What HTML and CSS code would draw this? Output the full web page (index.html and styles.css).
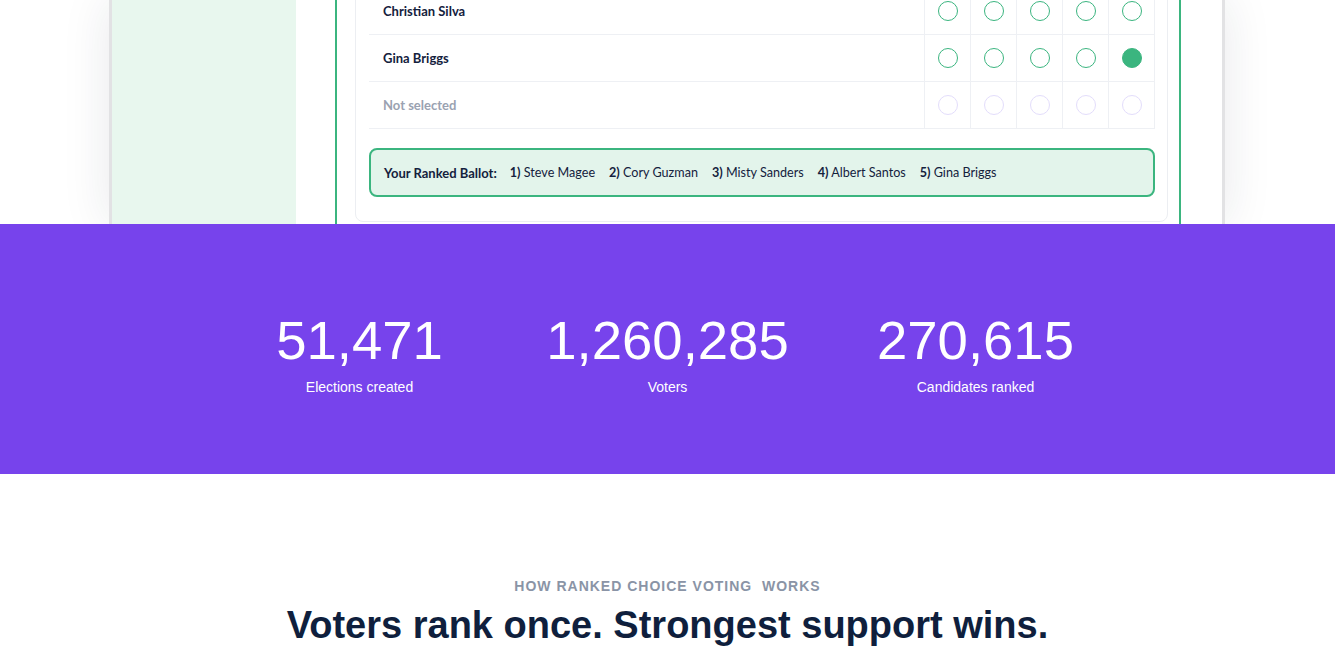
FILE: index.html
```html
<!DOCTYPE html>
<html lang="en">
<head>
<meta charset="utf-8">
<title>Ranked Choice Voting</title>
<link rel="stylesheet" href="styles.css">
</head>
<body>
<section class="hero">
  <div class="frame">
    <aside class="sidebar"></aside>
    <div class="main">
      <div class="panel">
        <div class="card">
          <div class="table">
            <div class="row">
              <div class="name">Christian Silva</div>
              <div class="cell"><span class="dot"></span></div>
              <div class="cell"><span class="dot"></span></div>
              <div class="cell"><span class="dot"></span></div>
              <div class="cell"><span class="dot"></span></div>
              <div class="cell"><span class="dot"></span></div>
            </div>
            <div class="row">
              <div class="name">Gina Briggs</div>
              <div class="cell"><span class="dot"></span></div>
              <div class="cell"><span class="dot"></span></div>
              <div class="cell"><span class="dot"></span></div>
              <div class="cell"><span class="dot"></span></div>
              <div class="cell"><span class="dot filled"></span></div>
            </div>
            <div class="row">
              <div class="name muted">Not selected</div>
              <div class="cell"><span class="dot faint"></span></div>
              <div class="cell"><span class="dot faint"></span></div>
              <div class="cell"><span class="dot faint"></span></div>
              <div class="cell"><span class="dot faint"></span></div>
              <div class="cell"><span class="dot faint"></span></div>
            </div>
          </div>
          <div class="ballot">
            <strong>Your Ranked Ballot:</strong>
            <span class="pick"><b>1)</b> Steve Magee</span>
            <span class="pick"><b>2)</b> Cory Guzman</span>
            <span class="pick"><b>3)</b> Misty Sanders</span>
            <span class="pick"><b>4)</b> Albert Santos</span>
            <span class="pick"><b>5)</b> Gina Briggs</span>
          </div>
        </div>
      </div>
    </div>
  </div>
</section>

<section class="stats">
  <div class="stat">
    <div class="num">51,471</div>
    <div class="label">Elections created</div>
  </div>
  <div class="stat">
    <div class="num">1,260,285</div>
    <div class="label">Voters</div>
  </div>
  <div class="stat">
    <div class="num">270,615</div>
    <div class="label">Candidates ranked</div>
  </div>
</section>

<section class="how">
  <div class="eyebrow">HOW RANKED CHOICE VOTING&nbsp; WORKS</div>
  <h2 class="title">Voters rank once. Strongest support wins.</h2>
</section>
</body>
</html>
```

FILE: styles.css
```css
* { box-sizing: border-box; }

body {
  margin: 0;
  background: #ffffff;
  font-family: "Liberation Sans", Arial, sans-serif;
}

.hero {
  height: 224px;
  overflow: hidden;
  display: flex;
  padding-left: 109px;
}

.frame {
  width: 1116px;
  flex: none;
  display: flex;
  border-left: 3px solid #e2e2e4;
  border-right: 3px solid #e2e2e4;
  box-shadow: 0 0 45px rgba(30, 40, 60, 0.10);
  background: #ffffff;
}

.sidebar {
  width: 184px;
  flex: none;
  background: #e8f7ee;
}

.main {
  flex: 1;
  padding: 0 41px 0 39px;
}

.panel {
  margin-top: -80px;
  border: 2px solid #3bb57f;
  padding: 20px 11px 0 18px;
  height: 400px;
}

.card {
  border: 1px solid #eceef2;
  border-radius: 8px;
  padding: 45px 12px 24px 13px;
  font-family: Lato, "Open Sans", sans-serif;
}

.table {
  display: flex;
  flex-direction: column;
}

.row {
  display: flex;
  height: 47px;
  border-bottom: 1px solid #eef0f4;
}

.name {
  flex: 1;
  display: flex;
  align-items: center;
  padding-left: 14px;
  font-size: 13px;
  font-weight: 700;
  color: #14213d;
}

.name.muted {
  color: #9aa2b1;
}

.cell {
  width: 46px;
  flex: none;
  display: flex;
  align-items: center;
  justify-content: center;
  border-left: 1px solid #eef0f4;
}

.cell:last-child {
  width: 47px;
  border-right: 1px solid #eef0f4;
}

.dot {
  width: 20px;
  height: 20px;
  border-radius: 50%;
  border: 1.5px solid #3bb57f;
}

.dot.filled {
  background: #3bb57f;
}

.dot.faint {
  border-color: #e3ddfb;
}

.ballot {
  margin-top: 19px;
  height: 49px;
  border: 2px solid #3bb57f;
  border-radius: 8px;
  background: #e3f4eb;
  display: flex;
  align-items: center;
  gap: 14px;
  padding-left: 13px;
  font-size: 13px;
  color: #14213d;
}

.ballot strong {
  font-weight: 700;
  margin-right: -1px;
}

.pick {
  font-size: 12.6px;
}

.pick b {
  font-weight: 700;
}

.stats {
  background: #7743ec;
  height: 250px;
  display: flex;
  justify-content: center;
  padding-top: 90px;
  color: #ffffff;
}

.stat {
  width: 308px;
  text-align: center;
}

.num {
  font-size: 54.5px;
  line-height: 54px;
}

.label {
  margin-top: 9px;
  font-size: 14px;
  line-height: 20px;
}

.how {
  text-align: center;
  padding-top: 102px;
}

.eyebrow {
  font-size: 14px;
  font-weight: 700;
  letter-spacing: 1px;
  color: #8a94a6;
  line-height: 20px;
}

.title {
  margin: 6px 0 0;
  font-size: 38px;
  line-height: 46px;
  font-weight: 700;
  color: #0f1f3d;
}
```
